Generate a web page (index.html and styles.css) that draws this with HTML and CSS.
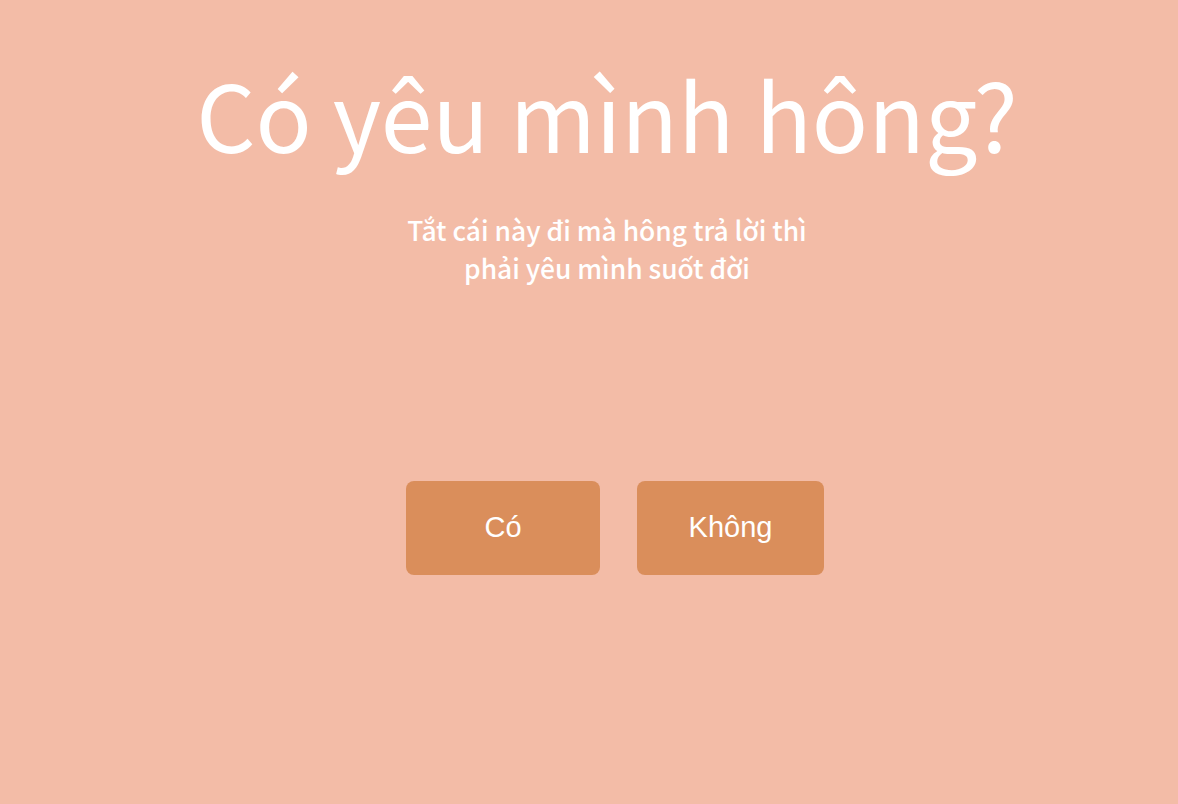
FILE: index.html
```html
<!DOCTYPE html>
<html lang="vi">
<head>
<meta charset="utf-8">
<title>Có yêu mình hông?</title>
<link rel="stylesheet" href="styles.css">
</head>
<body>
<main class="page">
  <h1 class="title">Có yêu mình hông?</h1>
  <p class="subtitle">Tắt cái này đi mà hông trả lời thì phải yêu mình suốt đời</p>
  <div class="actions">
    <button class="btn btn-yes">Có</button>
    <button class="btn btn-no">Không</button>
  </div>
</main>
</body>
</html>
```

FILE: styles.css
```css
html, body {
  margin: 0;
  padding: 0;
  height: 100%;
  background: #f3bca7;
}
.page {
  display: flex;
  flex-direction: column;
  align-items: center;
  padding-left: 36px;
  padding-top: 57px;
  box-sizing: border-box;
  min-height: 100%;
}
.title {
  margin: 0;
  font-family: "Noto Sans CJK SC", "Noto Sans", sans-serif;
  font-weight: 400;
  font-size: 93px;
  line-height: 1.2;
  color: #ffffff;
  white-space: nowrap;
}
.subtitle {
  margin: 42px 0 0;
  width: 420px;
  text-align: center;
  font-family: "Noto Sans CJK SC", "Noto Sans", sans-serif;
  font-weight: 500;
  font-size: 26.4px;
  line-height: 38px;
  color: #ffffff;
}
.actions {
  display: flex;
  gap: 37px;
  margin-top: 194px;
  margin-left: 16px;
}
.btn {
  height: 94px;
  border: none;
  border-radius: 8px;
  background: #da8e5b;
  color: #ffffff;
  font-family: "Liberation Sans", Arial, sans-serif;
  font-size: 29px;
  font-weight: 400;
  cursor: pointer;
}
.btn-yes { width: 194px; }
.btn-no { width: 187px; }
```
